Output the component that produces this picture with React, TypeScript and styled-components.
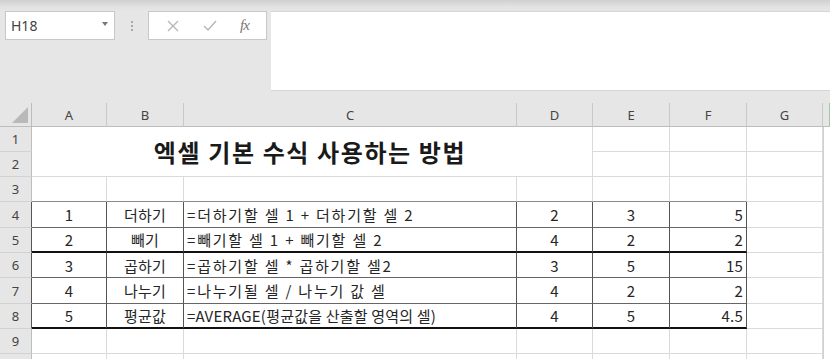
import React from "react";
import styled, { createGlobalStyle } from "styled-components";

const Global = createGlobalStyle`
  html, body { margin: 0; padding: 0; background: #e6e6e6; overflow: hidden; }
  * { box-sizing: border-box; }
`;

const Page = styled.div`
  width: 830px;
  height: 359px;
  background: #e6e6e6;
  font-family: "Noto Sans", "Noto Sans CJK KR", sans-serif;
  color: #333;
  overflow: hidden;
`;

const TopStrip = styled.div`
  height: 11px;
  background: linear-gradient(#cfcfcf, #e2e2e2 60%, #e6e6e6);
`;

const Toolbar = styled.div`
  display: flex;
  align-items: flex-start;
  height: 92px;
  padding-left: 5px;
`;

const NameBox = styled.div`
  width: 110px;
  height: 29px;
  background: #fff;
  border: 1px solid #c8c8c8;
  display: flex;
  align-items: center;
  justify-content: space-between;
  padding: 0 6px 0 5px;
  font-size: 14px;
  color: #444;
`;

const Caret = styled.span`
  width: 0;
  height: 0;
  border-left: 3.5px solid transparent;
  border-right: 3.5px solid transparent;
  border-top: 4px solid #777;
  margin-top: -4px;
`;

const Dots = styled.div`
  width: 33px;
  height: 29px;
  display: flex;
  flex-direction: column;
  align-items: center;
  justify-content: center;
  gap: 2px;
  span {
    width: 2px;
    height: 2px;
    background: #a8a8a8;
  }
`;

const FxBox = styled.div`
  width: 119px;
  height: 29px;
  background: #fff;
  border: 1px solid #c8c8c8;
  display: flex;
  align-items: center;
  justify-content: space-around;
  padding: 0 6px;
`;

const FxText = styled.span`
  font-family: "Liberation Serif", serif;
  font-style: italic;
  font-size: 15px;
  color: #777;
  letter-spacing: -1px;
`;

const FormulaBar = styled.div`
  flex: 1;
  height: 80px;
  margin-left: 4px;
  background: #fff;
  border-top: 1px solid #d6d6d6;
  border-bottom: 1px solid #d6d6d6;
`;

const Sheet = styled.div`
  display: grid;
  grid-template-columns: 32px 75px 77px 333px 76px 77px 77px 76px 1fr;
  grid-template-rows: 24px 25px 25px 25px 26px 25px 25px 26px 25px 25px 25px;
  background: #fff;
`;

const ColHead = styled.div<{ $last?: boolean }>`
  background: #e6e6e6;
  border-right: 1px solid ${(p) => (p.$last ? "#9fc99f" : "#c9c9c9")};
  border-bottom: 1px solid #bdbdbd;
  display: flex;
  align-items: center;
  justify-content: center;
  font-size: 13px;
  color: #444;
`;

const Corner = styled.div`
  background: #e6e6e6;
  border-right: 1px solid #bdbdbd;
  border-bottom: 1px solid #bdbdbd;
  position: relative;
  &::after {
    content: "";
    position: absolute;
    right: 3px;
    bottom: 3px;
    border-left: 16px solid transparent;
    border-bottom: 16px solid #b9b9b9;
  }
`;

const RowHead = styled.div<{ $dark?: boolean }>`
  background: #e6e6e6;
  border-right: 1px solid ${(p) => (p.$dark ? "#555" : "#bdbdbd")};
  border-bottom: 1px solid #d2d2d2;
  display: flex;
  align-items: center;
  justify-content: center;
  font-size: 13px;
  color: #444;
`;

type Align = "left" | "center" | "right";

const Cell = styled.div<{
  $align?: Align;
  $br?: string;
  $bb?: string;
  $bbw?: number;
  $wide?: boolean;
}>`
  border-right: 1px solid ${(p) => p.$br || "#dadada"};
  border-bottom: ${(p) => p.$bbw || 1}px solid ${(p) => p.$bb || "#dadada"};
  display: flex;
  align-items: center;
  justify-content: ${(p) =>
    p.$align === "left" ? "flex-start" : p.$align === "right" ? "flex-end" : "center"};
  padding: 0 3px;
  font-family: "Noto Sans CJK KR", "Noto Sans", sans-serif;
  font-size: 15px;
  letter-spacing: ${(p) => (p.$wide ? "1.8px" : "0.2px")};
  color: #262626;
  white-space: nowrap;
`;

const Title = styled.div`
  grid-column: span 4;
  grid-row: span 2;
  border-right: 1px solid #dadada;
  border-bottom: 1px solid #dadada;
  display: flex;
  align-items: center;
  justify-content: center;
  font-family: "Noto Sans CJK KR", sans-serif;
  font-weight: 700;
  font-size: 24px;
  letter-spacing: 1.6px;
  color: #1a1a1a;
  padding-right: 4px;
`;

const Edge = styled.div`
  background: #fff;
  border-left: 1px solid #d0d0d0;
`;

const cols = ["A", "B", "C", "D", "E", "F", "G"];

const data: [string, string, string, string, string, string][] = [
  ["1", "더하기", "=더하기할 셀 1 + 더하기할 셀 2", "2", "3", "5"],
  ["2", "빼기", "=빼기할 셀 1 + 빼기할 셀 2", "4", "2", "2"],
  ["3", "곱하기", "=곱하기할 셀 * 곱하기할 셀2", "3", "5", "15"],
  ["4", "나누기", "=나누기될 셀 / 나누기 값 셀", "4", "2", "2"],
  ["5", "평균값", "=AVERAGE(평균값을 산출할 영역의 셀)", "4", "5", "4.5"],
];

const aligns: Align[] = ["center", "center", "left", "center", "center", "right"];

const EmptyRow: React.FC<{ n?: number; aboveTable?: boolean }> = ({ n, aboveTable }) => (
  <>
    <RowHead>{n}</RowHead>
    {cols.map((c, i) => (
      <Cell key={c} $bb={aboveTable && i < 6 ? "#8a8a8a" : undefined} />
    ))}
    <Edge />
  </>
);

export default function App() {
  return (
    <Page>
      <Global />
      <TopStrip />
      <Toolbar>
        <NameBox>
          H18
          <Caret />
        </NameBox>
        <Dots>
          <span />
          <span />
          <span />
        </Dots>
        <FxBox>
          <svg width="14" height="14" viewBox="0 0 14 14">
            <path d="M2 2 L12 12 M12 2 L2 12" stroke="#b5b5b5" strokeWidth="1.3" />
          </svg>
          <svg width="16" height="14" viewBox="0 0 16 14">
            <path d="M2 7 L6 11 L14 2" stroke="#b5b5b5" strokeWidth="1.4" fill="none" />
          </svg>
          <FxText>fx</FxText>
        </FxBox>
        <FormulaBar />
      </Toolbar>
      <Sheet>
        <Corner />
        {cols.map((c) => (
          <ColHead key={c}>{c}</ColHead>
        ))}
        <ColHead $last />

        <RowHead>1</RowHead>
        <Title>엑셀 기본 수식 사용하는 방법</Title>
        <Cell />
        <Cell />
        <Cell />
        <Edge />
        <RowHead>2</RowHead>
        <Cell />
        <Cell />
        <Cell />
        <Edge />
        <EmptyRow n={3} aboveTable />

        {data.map((row, r) => {
          const thick = r === 1 || r === 4;
          return (
            <React.Fragment key={r}>
              <RowHead $dark>{r + 4}</RowHead>
              {row.map((v, i) => (
                <Cell
                  key={i}
                  $align={aligns[i]}
                  $br="#555"
                  $bb={thick ? "#111" : "#666"}
                  $bbw={thick ? 2 : 1}
                  $wide={i === 2 && r < 4}
                >
                  {v}
                </Cell>
              ))}
              <Cell />
              <Edge />
            </React.Fragment>
          );
        })}

        <EmptyRow n={9} />
        <EmptyRow />
      </Sheet>
    </Page>
  );
}
